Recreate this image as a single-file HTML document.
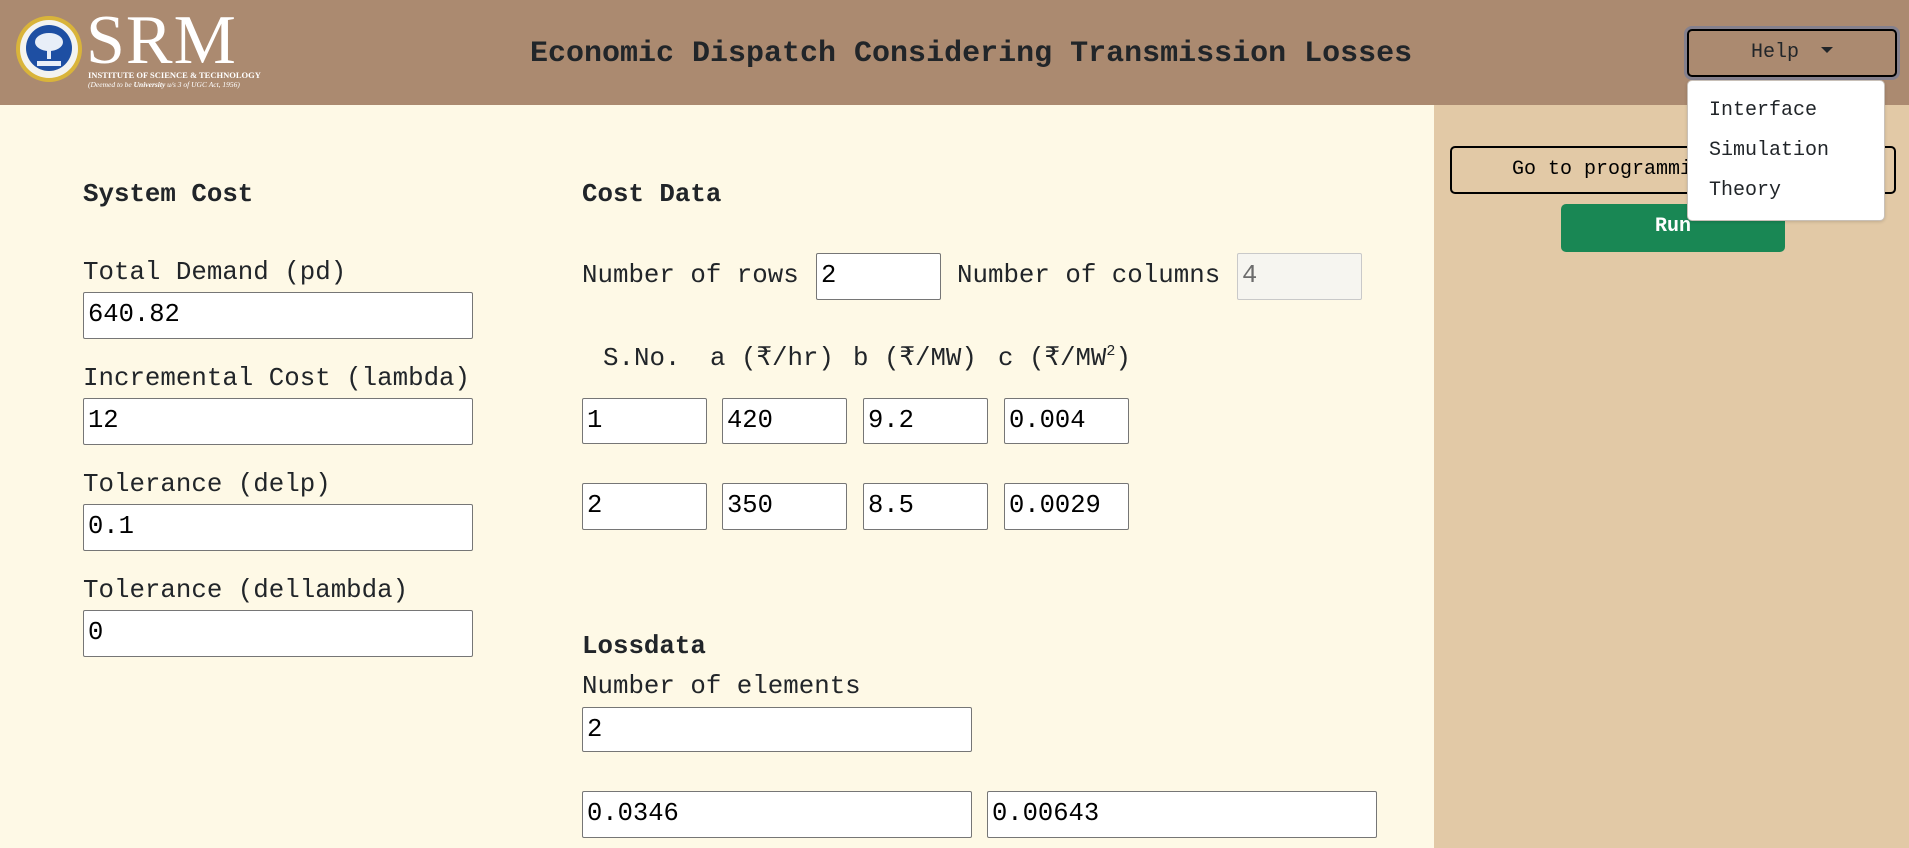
<!DOCTYPE html>
<html><head><meta charset="utf-8"><style>
*{box-sizing:border-box;margin:0;padding:0}
body{width:1909px;height:848px;overflow:hidden;background:#fef9e6;font-family:"Liberation Mono",monospace;color:#212529;position:relative}
.a{position:absolute;white-space:nowrap}
.hdr{left:0;top:0;width:1909px;height:105px;background:#ab8a70}
.side{left:1434px;top:105px;width:475px;height:743px;background:#e2c9a6}
.t{font-size:25.8px;line-height:30px}
.b{font-weight:bold}
.in{position:absolute;background:#fff;border:1px solid #767676;border-radius:2px;font-size:25.5px;line-height:44px;padding-left:4px;color:#000}
sup{font-size:15px;line-height:0;vertical-align:10px}
</style></head><body>
<div class="a hdr"></div>
<div class="a side"></div>
<svg class="a" style="left:15px;top:15px" width="68" height="68" viewBox="0 0 68 68">
<circle cx="34" cy="34" r="33" fill="#d9b43a"/><circle cx="34" cy="34" r="29" fill="#f3f3f0"/>
<circle cx="34" cy="33" r="23" fill="#1e4fa3"/>
<ellipse cx="34" cy="27" rx="14" ry="9" fill="#e8eef8"/><rect x="32" y="30" width="4" height="14" fill="#e8eef8"/>
<rect x="22" y="46" width="24" height="5" fill="#e8eef8"/></svg>
<div class="a" style="left:86px;top:4px;font-family:'Liberation Serif',serif;font-size:70px;line-height:74px;color:#fff;letter-spacing:1px">SRM</div>
<div class="a" style="left:88px;top:70px;font-family:'Liberation Serif',serif;font-size:8.5px;color:#fff;font-weight:bold">INSTITUTE OF SCIENCE &amp; TECHNOLOGY</div>
<div class="a" style="left:88px;top:80px;font-family:'Liberation Serif',serif;font-size:7.5px;color:#fff;font-style:italic">(Deemed to be <b>University</b> u/s 3 of UGC Act, 1956)</div>
<div class="a b" style="left:530px;top:35px;font-size:30px;line-height:38px;color:#212529">Economic Dispatch Considering Transmission Losses</div>
<div class="a" style="left:1684px;top:26px;width:216px;height:54px;border:4px solid #84808d;border-radius:8px"></div>
<div class="a" style="left:1687px;top:29px;width:210px;height:48px;border:2px solid #000;border-radius:5px;text-align:center;font-size:20px;line-height:44px;color:#212529">Help <span style="display:inline-block;width:0;height:0;border-left:6px solid transparent;border-right:6px solid transparent;border-top:6px solid #212529;vertical-align:4px;margin-left:10px"></span></div>
<div class="a" style="left:1450px;top:146px;width:446px;height:48px;border:2px solid #000;border-radius:5px;font-size:20px;line-height:44px;padding-left:60px;color:#000">Go to programming</div>
<div class="a" style="left:1561px;top:204px;width:224px;height:48px;background:#198754;border-radius:5px;color:#fff;font-weight:bold;font-size:20px;line-height:46px;text-align:center">Run</div>
<div class="a" style="left:1687px;top:80px;width:198px;height:141px;background:#fff;border:1px solid #c8c0b8;border-radius:5px;box-shadow:0 1px 3px rgba(0,0,0,.15)">
<div class="a" style="left:21px;top:16px;font-size:20px;line-height:28px;color:#212529">Interface</div>
<div class="a" style="left:21px;top:56px;font-size:20px;line-height:28px;color:#212529">Simulation</div>
<div class="a" style="left:21px;top:96px;font-size:20px;line-height:28px;color:#212529">Theory</div></div>

<div class="a t b" style="left:83px;top:180px">System Cost</div>
<div class="a t" style="left:83px;top:258px">Total Demand (pd)</div>
<div class="in" style="left:83px;top:292px;width:390px;height:47px">640.82</div>
<div class="a t" style="left:83px;top:364px">Incremental Cost (lambda)</div>
<div class="in" style="left:83px;top:398px;width:390px;height:47px">12</div>
<div class="a t" style="left:83px;top:470px">Tolerance (delp)</div>
<div class="in" style="left:83px;top:504px;width:390px;height:47px">0.1</div>
<div class="a t" style="left:83px;top:576px">Tolerance (dellambda)</div>
<div class="in" style="left:83px;top:610px;width:390px;height:47px">0</div>

<div class="a t b" style="left:582px;top:180px">Cost Data</div>
<div class="a t" style="left:582px;top:261px">Number of rows</div>
<div class="in" style="left:816px;top:253px;width:125px;height:47px">2</div>
<div class="a t" style="left:957px;top:261px">Number of columns</div>
<div class="in" style="left:1237px;top:253px;width:125px;height:47px;background:#f6f5f0;border-color:#c9c9c9;color:#6c6c6c">4</div>
<div class="a t" style="left:603px;top:344px">S.No.</div>
<div class="a t" style="left:710px;top:344px">a (₹/hr)</div>
<div class="a t" style="left:853px;top:344px">b (₹/MW)</div>
<div class="a t" style="left:998px;top:344px">c (₹/MW<sup>2</sup>)</div>
<div class="in" style="left:582px;top:398px;width:125px;height:46px">1</div>
<div class="in" style="left:722px;top:398px;width:125px;height:46px">420</div>
<div class="in" style="left:863px;top:398px;width:125px;height:46px">9.2</div>
<div class="in" style="left:1004px;top:398px;width:125px;height:46px">0.004</div>
<div class="in" style="left:582px;top:483px;width:125px;height:47px">2</div>
<div class="in" style="left:722px;top:483px;width:125px;height:47px">350</div>
<div class="in" style="left:863px;top:483px;width:125px;height:47px">8.5</div>
<div class="in" style="left:1004px;top:483px;width:125px;height:47px">0.0029</div>

<div class="a t b" style="left:582px;top:632px">Lossdata</div>
<div class="a t" style="left:582px;top:672px">Number of elements</div>
<div class="in" style="left:582px;top:707px;width:390px;height:45px">2</div>
<div class="in" style="left:582px;top:791px;width:390px;height:47px">0.0346</div>
<div class="in" style="left:987px;top:791px;width:390px;height:47px">0.00643</div>
</body></html>
